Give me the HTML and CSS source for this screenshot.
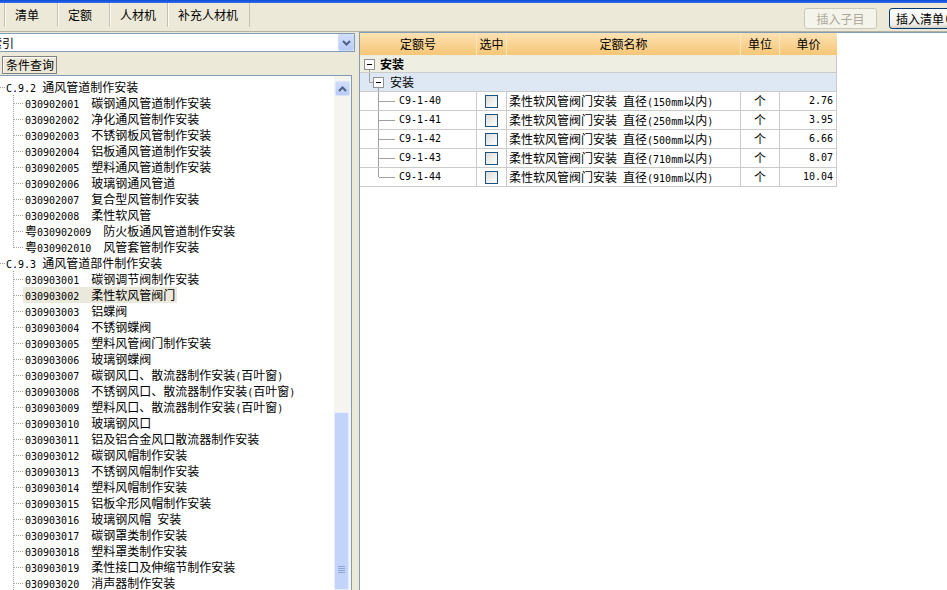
FILE: index.html
```html
<!DOCTYPE html>
<html lang="zh">
<head>
<meta charset="utf-8">
<title>定额</title>
<link rel="stylesheet" href="styles.css">
</head>
<body>
<div class="titlebar"></div>
<div class="toolbar">
  <div class="tab w53">清单</div>
  <div class="tab w52">定额</div>
  <div class="tab">人材机</div>
  <div class="tab last">补充人材机</div>
  <div class="tbtns">
    <div class="tbtn disabled">插入子目</div>
    <div class="tbtn primary">插入清单<span class="m">(Q)</span></div>
  </div>
</div>
<div class="main">
  <div class="left">
    <div class="combo">
      <div class="combo-text">索引</div>
      <div class="dd"><svg width="9" height="6" viewBox="0 0 9 6"><path d="M1 1 L4.5 4.5 L8 1" fill="none" stroke="#4D6185" stroke-width="2"/></svg></div>
    </div>
    <div class="qbtn">条件查询</div>
    <div class="treebox">
      <div class="tree">
        <div class="row"><span class="tw rw"></span><span class="lbl rl"><span class="m">C.9.2 </span>通风管道制作安装</span></div>
        <div class="kids">
          <div class="row"><span class="tw"></span><span class="lbl"><span class="m c">030902001</span>碳钢通风管道制作安装</span></div>
          <div class="row"><span class="tw"></span><span class="lbl"><span class="m c">030902002</span>净化通风管制作安装</span></div>
          <div class="row"><span class="tw"></span><span class="lbl"><span class="m c">030902003</span>不锈钢板风管制作安装</span></div>
          <div class="row"><span class="tw"></span><span class="lbl"><span class="m c">030902004</span>铝板通风管道制作安装</span></div>
          <div class="row"><span class="tw"></span><span class="lbl"><span class="m c">030902005</span>塑料通风管道制作安装</span></div>
          <div class="row"><span class="tw"></span><span class="lbl"><span class="m c">030902006</span>玻璃钢通风管道</span></div>
          <div class="row"><span class="tw"></span><span class="lbl"><span class="m c">030902007</span>复合型风管制作安装</span></div>
          <div class="row"><span class="tw"></span><span class="lbl"><span class="m c">030902008</span>柔性软风管</span></div>
          <div class="row"><span class="tw"></span><span class="lbl"><span class="c">粤<span class="m">030902009</span></span>防火板通风管道制作安装</span></div>
          <div class="row"><span class="tw end"></span><span class="lbl"><span class="c">粤<span class="m">030902010</span></span>风管套管制作安装</span></div>
        </div>
        <div class="row"><span class="tw rw"></span><span class="lbl rl"><span class="m">C.9.3 </span>通风管道部件制作安装</span></div>
        <div class="kids">
          <div class="row"><span class="tw"></span><span class="lbl"><span class="m c">030903001</span>碳钢调节阀制作安装</span></div>
          <div class="row"><span class="tw"></span><span class="lbl sel"><span class="m c">030903002</span>柔性软风管阀门</span></div>
          <div class="row"><span class="tw"></span><span class="lbl"><span class="m c">030903003</span>铝蝶阀</span></div>
          <div class="row"><span class="tw"></span><span class="lbl"><span class="m c">030903004</span>不锈钢蝶阀</span></div>
          <div class="row"><span class="tw"></span><span class="lbl"><span class="m c">030903005</span>塑料风管阀门制作安装</span></div>
          <div class="row"><span class="tw"></span><span class="lbl"><span class="m c">030903006</span>玻璃钢蝶阀</span></div>
          <div class="row"><span class="tw"></span><span class="lbl"><span class="m c">030903007</span>碳钢风口、散流器制作安装<span class="m">(</span>百叶窗<span class="m">)</span></span></div>
          <div class="row"><span class="tw"></span><span class="lbl"><span class="m c">030903008</span>不锈钢风口、散流器制作安装<span class="m">(</span>百叶窗<span class="m">)</span></span></div>
          <div class="row"><span class="tw"></span><span class="lbl"><span class="m c">030903009</span>塑料风口、散流器制作安装<span class="m">(</span>百叶窗<span class="m">)</span></span></div>
          <div class="row"><span class="tw"></span><span class="lbl"><span class="m c">030903010</span>玻璃钢风口</span></div>
          <div class="row"><span class="tw"></span><span class="lbl"><span class="m c">030903011</span>铝及铝合金风口散流器制作安装</span></div>
          <div class="row"><span class="tw"></span><span class="lbl"><span class="m c">030903012</span>碳钢风帽制作安装</span></div>
          <div class="row"><span class="tw"></span><span class="lbl"><span class="m c">030903013</span>不锈钢风帽制作安装</span></div>
          <div class="row"><span class="tw"></span><span class="lbl"><span class="m c">030903014</span>塑料风帽制作安装</span></div>
          <div class="row"><span class="tw"></span><span class="lbl"><span class="m c">030903015</span>铝板伞形风帽制作安装</span></div>
          <div class="row"><span class="tw"></span><span class="lbl"><span class="m c">030903016</span>玻璃钢风帽<span class="m"> </span>安装</span></div>
          <div class="row"><span class="tw"></span><span class="lbl"><span class="m c">030903017</span>碳钢罩类制作安装</span></div>
          <div class="row"><span class="tw"></span><span class="lbl"><span class="m c">030903018</span>塑料罩类制作安装</span></div>
          <div class="row"><span class="tw"></span><span class="lbl"><span class="m c">030903019</span>柔性接口及伸缩节制作安装</span></div>
          <div class="row"><span class="tw"></span><span class="lbl"><span class="m c">030903020</span>消声器制作安装</span></div>
        </div>
      </div>
      <div class="vscroll">
        <div class="sbtn"><svg width="9" height="6" viewBox="0 0 9 6"><path d="M1 5 L4.5 1.5 L8 5" fill="none" stroke="#4D6185" stroke-width="2"/></svg></div>
        <div class="track"></div>
        <div class="thumb"><div class="grip"></div></div>
      </div>
    </div>
  </div>
  <div class="split"></div>
  <div class="right">
    <table class="grid">
      <colgroup><col class="c1"><col class="c2"><col class="c3"><col class="c4"><col class="c5"></colgroup>
      <thead>
        <tr><th>定额号</th><th>选中</th><th>定额名称</th><th>单位</th><th class="lastc">单价</th></tr>
      </thead>
      <tbody>
        <tr class="g1"><td colspan="5"><div class="gcell">
          <svg class="exp" width="20" height="17" viewBox="0 0 20 17"><line x1="9.5" y1="14.5" x2="9.5" y2="17" stroke="#A0A0A0"/><rect x="4.5" y="4.5" width="10" height="10" fill="#fff" stroke="#919191"/><line x1="7" y1="9.5" x2="12" y2="9.5" stroke="#000"/></svg><b>安装</b></div></td></tr>
        <tr class="g2"><td colspan="5"><div class="gcell">
          <svg class="exp" width="30" height="18" viewBox="0 0 30 18"><path d="M9.5 0 V9.5 H13.5" fill="none" stroke="#A0A0A0"/><line x1="18.5" y1="14.5" x2="18.5" y2="18" stroke="#A0A0A0"/><rect x="13.5" y="4.5" width="10" height="10" fill="#fff" stroke="#919191"/><line x1="16" y1="9.5" x2="21" y2="9.5" stroke="#000"/></svg>安装</div></td></tr>
        <tr><td class="code"><div class="br"><span class="m">C9-1-40</span></div></td><td class="chk"><div class="cw"><span class="cb"></span></div></td><td class="name"><div class="nw">柔性软风管阀门安装<span class="m"> </span>直径<span class="m">(150mm</span>以内<span class="m">)</span></div></td><td class="unit">个</td><td class="price m">2.76</td></tr>
        <tr><td class="code"><div class="br"><span class="m">C9-1-41</span></div></td><td class="chk"><div class="cw"><span class="cb"></span></div></td><td class="name"><div class="nw">柔性软风管阀门安装<span class="m"> </span>直径<span class="m">(250mm</span>以内<span class="m">)</span></div></td><td class="unit">个</td><td class="price m">3.95</td></tr>
        <tr><td class="code"><div class="br"><span class="m">C9-1-42</span></div></td><td class="chk"><div class="cw"><span class="cb"></span></div></td><td class="name"><div class="nw">柔性软风管阀门安装<span class="m"> </span>直径<span class="m">(500mm</span>以内<span class="m">)</span></div></td><td class="unit">个</td><td class="price m">6.66</td></tr>
        <tr><td class="code"><div class="br"><span class="m">C9-1-43</span></div></td><td class="chk"><div class="cw"><span class="cb"></span></div></td><td class="name"><div class="nw">柔性软风管阀门安装<span class="m"> </span>直径<span class="m">(710mm</span>以内<span class="m">)</span></div></td><td class="unit">个</td><td class="price m">8.07</td></tr>
        <tr><td class="code"><div class="br end"><span class="m">C9-1-44</span></div></td><td class="chk"><div class="cw"><span class="cb"></span></div></td><td class="name"><div class="nw">柔性软风管阀门安装<span class="m"> </span>直径<span class="m">(910mm</span>以内<span class="m">)</span></div></td><td class="unit">个</td><td class="price m">10.04</td></tr>
      </tbody>
    </table>
  </div>
</div>
</body>
</html>
```
FILE: styles.css
```css
* { box-sizing: border-box; }
html, body { margin: 0; padding: 0; }
body {
  width: 947px;
  height: 590px;
  overflow: hidden;
  background: #ECE9D8;
  color: #000;
  font-family: "Noto Sans CJK SC", sans-serif;
  font-size: 12px;
  line-height: 16px;
}
.m { font-family: "DejaVu Sans Mono", monospace; font-size: 10px; }

.titlebar { height: 3px; background: linear-gradient(#0B4FD8, #2F6DEB); }

.toolbar {
  display: flex;
  width: 989px;
  height: 29px;
  padding-left: 4px;
  border-bottom: 1px solid #B5B2A3;
  background: #ECE9D8;
}
.tab {
  display: flex;
  align-items: center;
  height: 24px;
  padding: 0 11px 1px 10px;
  border-left: 1px solid #C3C0B0;
  box-shadow: inset 1px 0 0 #FBFAF5;
  white-space: nowrap;
}
.tab.w53 { width: 53px; }
.tab.w52 { width: 52px; }
.tab.last { border-right: 1px solid #C3C0B0; }
.tbtns {
  margin-left: auto;
  display: flex;
  gap: 12px;
  padding-top: 5px;
}
.tbtn {
  height: 21px;
  border-radius: 3px;
  display: flex;
  align-items: center;
  white-space: nowrap;
  line-height: 19px;
}
.tbtn.disabled {
  width: 73px;
  justify-content: center;
  color: #ACA899;
  border: 1px solid #CAC8BB;
  background: #F5F4EA;
}
.tbtn.primary {
  width: 100px;
  padding-left: 6px;
  border: 1px solid #003C74;
  background: linear-gradient(#FFFFFF, #F0EFEA 80%, #D6D0C5);
}

.main { display: flex; height: 558px; }

.left { width: 355px; display: flex; flex-direction: column; }
.combo {
  margin-top: 1px;
  height: 19px;
  display: flex;
  background: #fff;
  border: 1px solid #7F9DB9;
  border-left: none;
}
.combo-text { flex: 1; margin-left: -10px; line-height: 17px; }
.dd {
  width: 16px;
  height: 17px;
  display: flex;
  align-items: center;
  justify-content: center;
  background: linear-gradient(#D2DEFB, #B7CBF7);
  border: 1px solid #CCD9F8;
  border-radius: 2px;
}
.qbtn {
  margin: 4px 0 0 2px;
  width: 55px;
  height: 18px;
  padding-left: 3px;
  line-height: 16px;
  border: 1px solid #808080;
  box-shadow: inset 1px 1px 0 #fff;
  background: #ECE9D8;
}
.treebox {
  margin-top: 1px;
  width: 352px;
  flex: 1;
  min-height: 0;
  display: flex;
  background: #fff;
  border-top: 1px solid #7F9DB9;
  border-right: 1px solid #7F9DB9;
}
.tree { flex: 1; padding-top: 3px; overflow: hidden; white-space: nowrap; }
.row { display: flex; align-items: center; height: 16px; }
.kids { margin-left: 13px; }
.tw {
  flex: none;
  width: 10px;
  height: 16px;
  background:
    linear-gradient(to right, #A0A0A0 50%, transparent 0) 1px 8px / 2px 1px repeat-x,
    linear-gradient(#A0A0A0 50%, transparent 0) 0 0 / 1px 2px repeat-y;
}
.tw.end {
  background:
    linear-gradient(#fff, #fff) 0 9px / 1px 7px no-repeat,
    linear-gradient(to right, #A0A0A0 50%, transparent 0) 1px 8px / 2px 1px repeat-x,
    linear-gradient(#A0A0A0 50%, transparent 0) 0 0 / 1px 2px repeat-y;
}
.tw.rw {
  width: 5px;
  background: linear-gradient(to right, #A0A0A0 50%, transparent 0) 0 8px / 2px 1px repeat-x;
}
.lbl { padding: 0 2px; height: 16px; }
.lbl.rl { padding-left: 1px; }
.lbl.sel { background: #EBE9DC; }
.c { margin-right: 12px; }

.vscroll {
  width: 17px;
  display: flex;
  flex-direction: column;
  background: #F5F4EE;
  padding-top: 4px;
}
.sbtn {
  margin: 1px 1px 0;
  height: 15px;
  display: flex;
  align-items: center;
  justify-content: center;
  background: linear-gradient(#D0DDFB, #B9CCF7);
  border: 1px solid #D9E3FB;
  border-radius: 2px;
}
.track { flex: 1; }
.thumb {
  height: 178px;
  margin: 0 2px 0 0;
  display: flex;
  flex-direction: column;
  justify-content: flex-end;
  align-items: center;
  padding-bottom: 16px;
  background: #C3D4FB;
  border: 1px solid #E8EEFD;
  border-radius: 2px;
}
.grip {
  width: 7px;
  height: 7px;
  background: linear-gradient(#8FA5D8 50%, transparent 0) 0 0 / 7px 2px repeat-y;
}

.split { width: 4px; }
.right {
  flex: 1;
  background: #fff;
  border-left: 1px solid #7F9DB9;
  border-top: 1px solid #7F9DB9;
}

.grid {
  border-collapse: separate;
  border-spacing: 0;
  table-layout: fixed;
  width: 477px;
}
.c1 { width: 117px; }
.c2 { width: 30px; }
.c3 { width: 234px; }
.c4 { width: 39px; }
.c5 { width: 57px; }
.grid th {
  height: 22px;
  padding: 0;
  font-weight: normal;
  text-align: center;
  background: linear-gradient(#FCE2B4, #F6C676);
  border-right: 1px solid #FBE6C0;
  line-height: 20px;
}
.grid th.lastc { border-right: none; }
.grid td {
  height: 19px;
  padding: 0;
  line-height: 18px;
  border-bottom: 1px solid #CBCBCB;
  border-right: 1px solid #CBCBCB;
  white-space: nowrap;
  overflow: hidden;
}
.grid .g1 td { height: 18px; background: #EFEEE3; }
.g2 td { background: #DEE8F5; }
.gcell { display: flex; align-items: center; height: 18px; }
.g1 .gcell { height: 17px; }
.exp { flex: none; display: block; }
.gcell b { font-weight: bold; }

td.code { padding-left: 18px; }
.br {
  display: flex;
  align-items: center;
  height: 18px;
  background: linear-gradient(#A0A0A0, #A0A0A0) 0 0 / 1px 100% no-repeat;
}
.br.end { background-size: 1px 50%; }
.br::before {
  content: "";
  width: 16px;
  height: 1px;
  margin-left: 1px;
  margin-right: 4px;
  background: #A0A0A0;
}
.cw { display: flex; align-items: center; justify-content: center; height: 18px; }
.cb {
  display: block;
  width: 13px;
  height: 13px;
  border: 1px solid #1C5180;
  background: linear-gradient(135deg, #DCDCD7, #FFFFFF);
}
td.name { padding-left: 2px; }
.nw { height: 18px; overflow: hidden; }
.nw .m { line-height: 10px; }
td.unit { text-align: center; }
td.price { text-align: right; padding-right: 3px; }
```
